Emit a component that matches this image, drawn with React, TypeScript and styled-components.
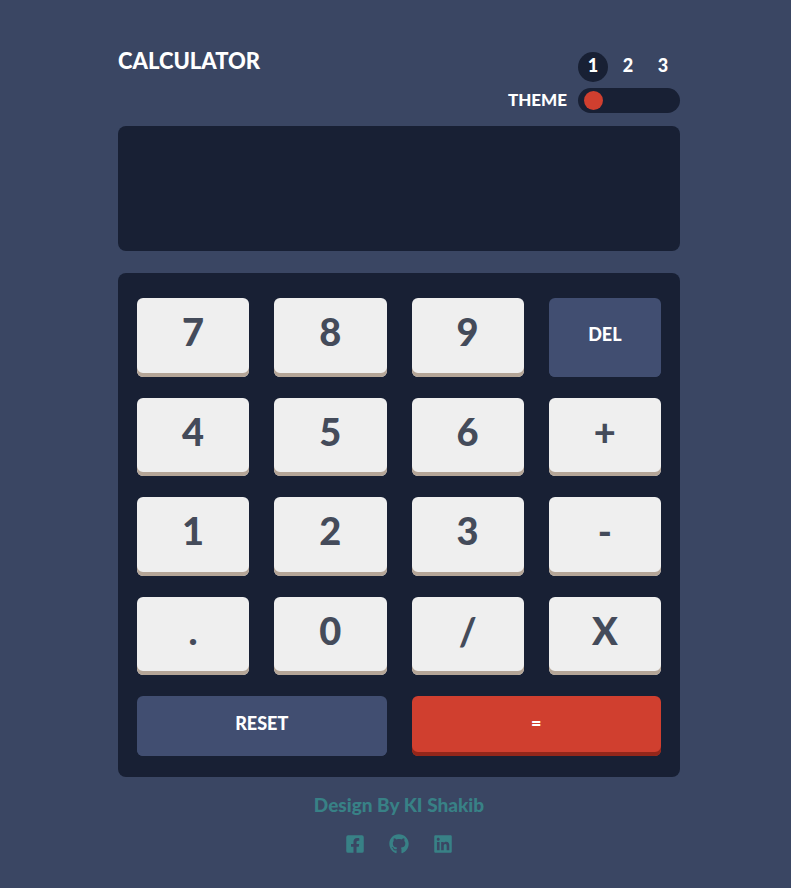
import { useState } from "react";
import styled, { createGlobalStyle } from "styled-components";
import { FaFacebookSquare, FaGithub, FaLinkedin } from "react-icons/fa";

const GlobalStyle = createGlobalStyle`
  *, *::before, *::after { box-sizing: border-box; }
  body {
    margin: 0;
    background: #3a4663;
    color: #ffffff;
    font-family: Lato, "Open Sans", sans-serif;
    font-weight: 900;
  }
  button, input { font: inherit; }
`;

const Page = styled.main`
  display: flex;
  justify-content: center;
  min-height: 100vh;
  padding: 48px 0 24px 7px;
`;

const Calculator = styled.div`
  width: 100%;
  max-width: 562px;
`;

const Header = styled.header`
  display: flex;
  justify-content: space-between;
  margin-bottom: 13px;
`;

const Title = styled.h1`
  margin: 0;
  font-size: 22px;
  line-height: 26px;
  font-weight: 900;
`;

const ThemePicker = styled.div`
  display: flex;
  align-items: flex-end;
  gap: 11px;
  padding-top: 4px;
`;

const ThemeLabel = styled.label`
  font-size: 17px;
  line-height: 26px;
`;

const ThemeControl = styled.div`
  display: flex;
  flex-direction: column;
  gap: 6px;
  width: 102px;
`;

const ThemeNumbers = styled.div`
  display: flex;
  gap: 5px;
`;

const ThemeNumber = styled.button<{ $active: boolean }>`
  width: 30px;
  height: 30px;
  padding: 0 0 4px;
  border: 0;
  border-radius: 50%;
  background: ${(p) => (p.$active ? "#182034" : "transparent")};
  color: #ffffff;
  font-size: 18px;
  line-height: 24px;
  cursor: pointer;
`;

const ThemeSlider = styled.input`
  appearance: none;
  display: block;
  width: 100%;
  height: 25px;
  margin: 0;
  padding: 0 6px;
  border-radius: 13px;
  background: #182034;
  cursor: pointer;

  &::-webkit-slider-thumb {
    appearance: none;
    width: 19px;
    height: 19px;
    border-radius: 50%;
    background: #d03f2f;
  }
`;

const Screen = styled.output`
  display: flex;
  align-items: center;
  justify-content: flex-end;
  height: 125px;
  margin-bottom: 22px;
  padding: 0 24px;
  overflow: hidden;
  border-radius: 8px;
  background: #182034;
  font-size: 38px;
`;

const Keypad = styled.section`
  padding: 25px 19px 21px;
  border-radius: 8px;
  background: #182034;
`;

const KeyGrid = styled.div`
  display: grid;
  grid-template-columns: repeat(4, 1fr);
  grid-template-rows: repeat(4, 1fr) 60px;
  gap: 21px 25px;
  min-height: 458px;
`;

type KeyKind = "digit" | "action" | "equals";

const keyStyles: Record<KeyKind, { face: string; edge: string; text: string; size: number; lift: number }> = {
  digit: { face: "#efefef", edge: "#b4a597", text: "#444b5a", size: 38, lift: 12 },
  action: { face: "#414e71", edge: "#414e71", text: "#ffffff", size: 18, lift: 6 },
  equals: { face: "#d03f2f", edge: "#93261a", text: "#ffffff", size: 18, lift: 6 },
};

const Key = styled.button<{ $kind: KeyKind; $wide?: boolean }>`
  grid-column: span ${(p) => (p.$wide ? 2 : 1)};
  padding: 0 0 ${(p) => keyStyles[p.$kind].lift}px;
  border: 0;
  border-radius: 6px;
  background: ${(p) => keyStyles[p.$kind].face};
  box-shadow: inset 0 -4px 0 ${(p) => keyStyles[p.$kind].edge};
  color: ${(p) => keyStyles[p.$kind].text};
  font-size: ${(p) => keyStyles[p.$kind].size}px;
  cursor: pointer;
`;

const Footer = styled.footer`
  display: flex;
  flex-direction: column;
  align-items: center;
  gap: 17px;
  padding-top: 16px;
  color: #388186;
`;

const Credit = styled.p`
  margin: 0;
  font-size: 19px;
  line-height: 24px;
`;

const SocialLinks = styled.nav`
  display: flex;
  gap: 24px;
`;

const SocialLink = styled.a`
  display: flex;
  color: inherit;
`;

const topKeys = ["7", "8", "9", "DEL", "4", "5", "6", "+", "1", "2", "3", "-", ".", "0", "/", "X"];
const themes = [1, 2, 3];

function evaluate(expression: string): string {
  const tokens = expression.match(/\d*\.?\d+|[-+/X]/g) ?? [];
  const terms: number[] = [];
  let operator = "+";
  for (const token of tokens) {
    if (/^[-+/X]$/.test(token)) {
      operator = token;
      continue;
    }
    const value = Number(token);
    if (operator === "+") terms.push(value);
    else if (operator === "-") terms.push(-value);
    else {
      const previous = terms.pop() ?? 0;
      terms.push(operator === "X" ? previous * value : previous / value);
    }
  }
  return terms.length ? String(terms.reduce((sum, term) => sum + term, 0)) : "";
}

export default function App() {
  const [theme, setTheme] = useState(1);
  const [entry, setEntry] = useState("");

  const press = (key: string) =>
    setEntry((current) => (key === "DEL" ? current.slice(0, -1) : current + key));

  return (
    <>
      <GlobalStyle />
      <Page>
        <Calculator>
          <Header>
            <Title>CALCULATOR</Title>
            <ThemePicker>
              <ThemeLabel htmlFor="theme">THEME</ThemeLabel>
              <ThemeControl>
                <ThemeNumbers>
                  {themes.map((n) => (
                    <ThemeNumber key={n} type="button" $active={n === theme} onClick={() => setTheme(n)}>
                      {n}
                    </ThemeNumber>
                  ))}
                </ThemeNumbers>
                <ThemeSlider
                  id="theme"
                  type="range"
                  min={1}
                  max={3}
                  value={theme}
                  onChange={(e) => setTheme(Number(e.target.value))}
                />
              </ThemeControl>
            </ThemePicker>
          </Header>
          <Screen>{entry}</Screen>
          <Keypad>
            <KeyGrid>
              {topKeys.map((key) => (
                <Key key={key} type="button" $kind={key === "DEL" ? "action" : "digit"} onClick={() => press(key)}>
                  {key}
                </Key>
              ))}
              <Key type="button" $kind="action" $wide onClick={() => setEntry("")}>
                RESET
              </Key>
              <Key type="button" $kind="equals" $wide onClick={() => setEntry(evaluate)}>
                =
              </Key>
            </KeyGrid>
          </Keypad>
          <Footer>
            <Credit>Design By KI Shakib</Credit>
            <SocialLinks>
              <SocialLink href="#facebook" aria-label="Facebook">
                <FaFacebookSquare size={20} />
              </SocialLink>
              <SocialLink href="#github" aria-label="GitHub">
                <FaGithub size={20} />
              </SocialLink>
              <SocialLink href="#linkedin" aria-label="LinkedIn">
                <FaLinkedin size={20} />
              </SocialLink>
            </SocialLinks>
          </Footer>
        </Calculator>
      </Page>
    </>
  );
}
